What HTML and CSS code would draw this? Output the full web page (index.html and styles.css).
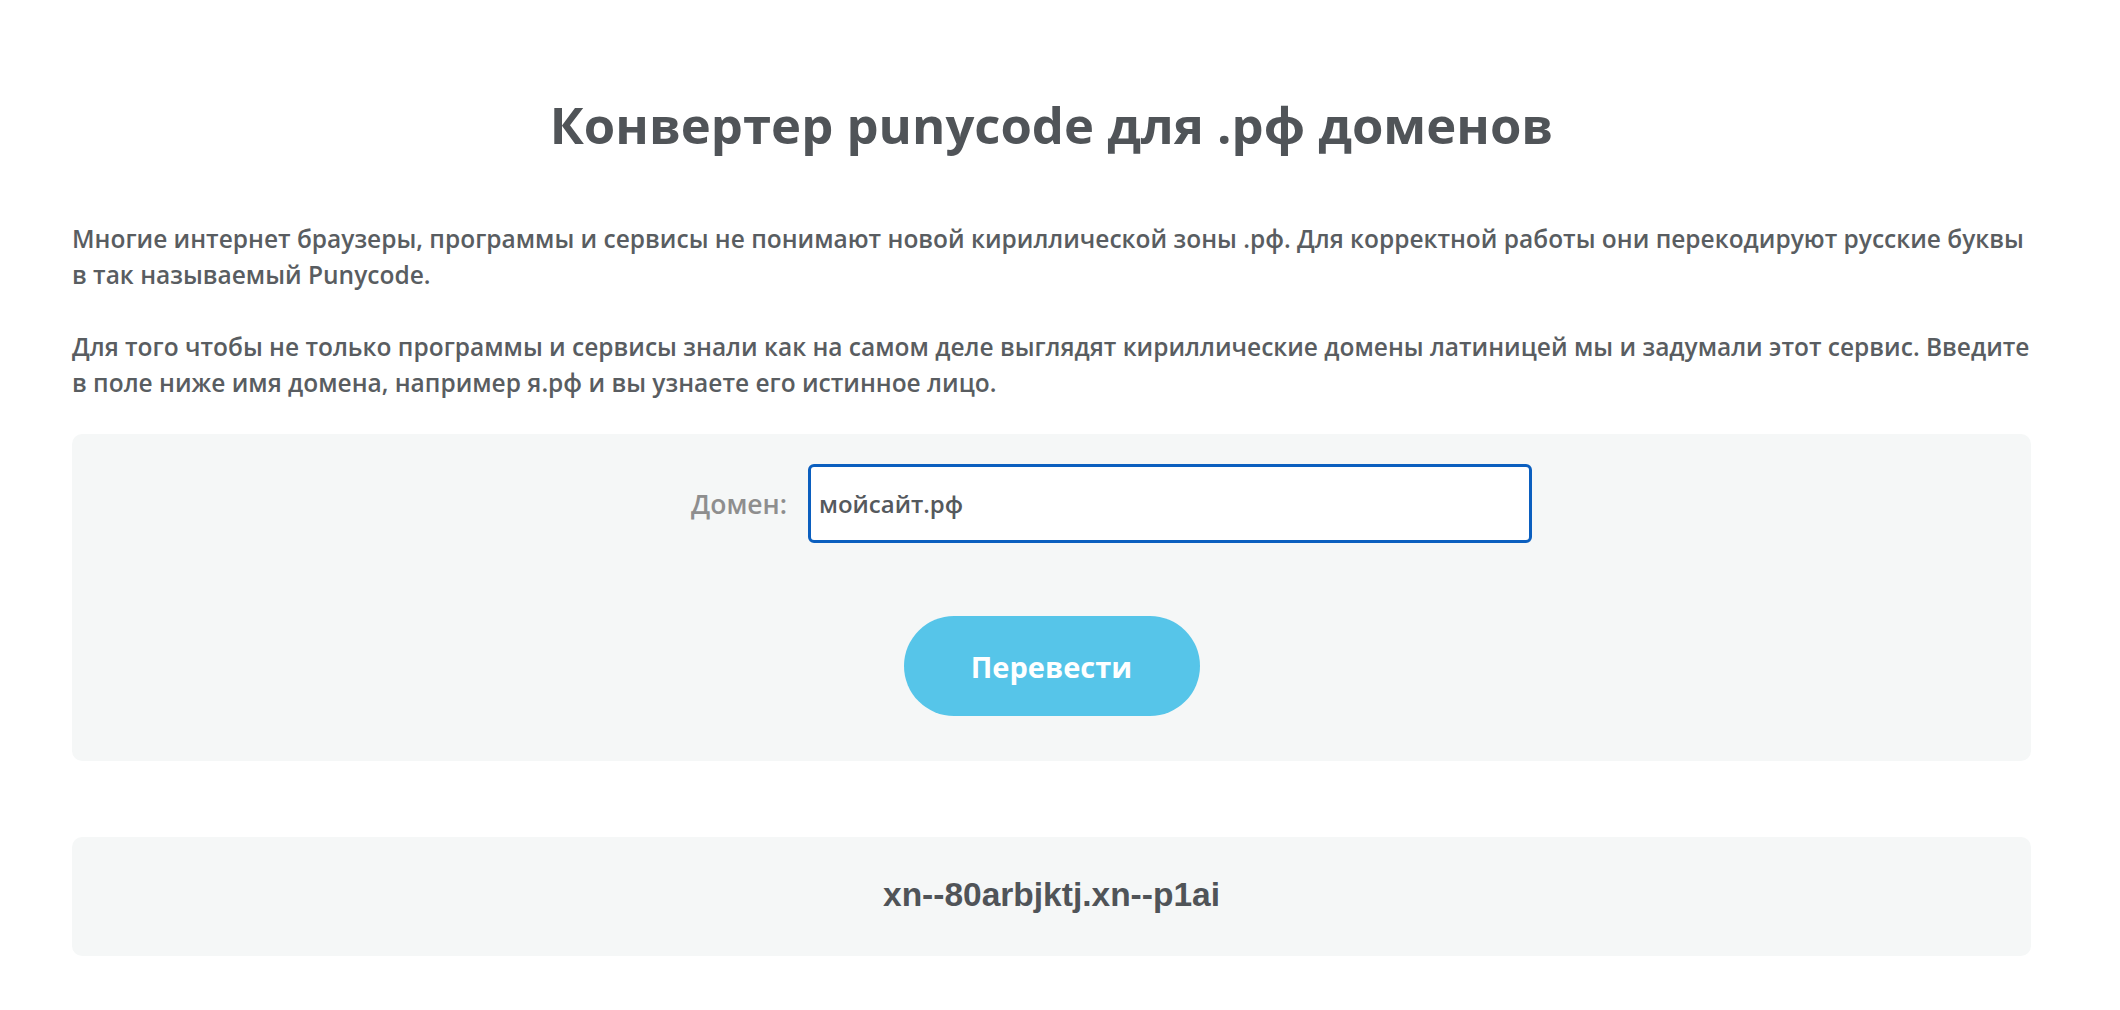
FILE: index.html
```html
<!DOCTYPE html>
<html lang="ru">
<head>
<meta charset="utf-8">
<title>Конвертер punycode для .рф доменов</title>
<link rel="stylesheet" href="styles.css">
</head>
<body>
<main class="page">
  <h1 class="title">Конвертер punycode для .рф доменов</h1>
  <p class="lead">Многие интернет браузеры, программы и сервисы не понимают новой кириллической зоны .рф. Для корректной работы они перекодируют русские буквы<br>в так называемый Punycode.</p>
  <p class="lead">Для того чтобы не только программы и сервисы знали как на самом деле выглядят кириллические домены латиницей мы и задумали этот сервис. Введите<br>в поле ниже имя домена, например я.рф и вы узнаете его истинное лицо.</p>
  <form class="panel converter">
    <div class="field-row">
      <label class="field-label" for="domain">Домен:</label>
      <input class="field-input" id="domain" type="text" value="мойсайт.рф">
    </div>
    <button class="btn" type="button">Перевести</button>
  </form>
  <div class="panel result">xn--80arbjktj.xn--p1ai</div>
</main>
</body>
</html>
```
FILE: styles.css
```css
* { box-sizing: border-box; }
body {
  margin: 0;
  background: #ffffff;
  color: #505458;
  font-family: "Open Sans", "Liberation Sans", sans-serif;
}
.page {
  padding: 95px 89px 0 72px;
}
.title {
  margin: 0 0 66px;
  font-size: 50.8px;
  line-height: 60px;
  font-weight: 700;
  text-align: center;
  color: #505458;
}
.lead {
  margin: 0 0 36px;
  font-size: 24.5px;
  line-height: 36px;
  font-weight: 600;
  white-space: nowrap;
  color: #595d61;
}
.lead + .panel { margin-top: -3px; }
.panel {
  background: #f5f7f7;
  border-radius: 10px;
}
.converter {
  padding: 30px 0 45px;
  display: flex;
  flex-direction: column;
  align-items: center;
}
.field-row {
  align-self: stretch;
  display: flex;
  align-items: center;
  justify-content: center;
  gap: 21px;
  padding-left: 96px;
}
.field-label {
  width: 120px;
  text-align: right;
  font-size: 26.5px;
  font-weight: 600;
  color: #8e8e8e;
}
.field-input {
  width: 724px;
  height: 79px;
  border: 3px solid #0b5fbf;
  border-radius: 6px;
  background: #ffffff;
  padding: 0 8px;
  font-family: "Open Sans", "Liberation Sans", sans-serif;
  font-size: 24px;
  font-weight: 600;
  color: #55595d;
  outline: none;
}
.btn {
  margin-top: 73px;
  width: 296px;
  height: 100px;
  border: none;
  border-radius: 50px;
  background: #56c5e9;
  color: #ffffff;
  font-family: "Open Sans", "Liberation Sans", sans-serif;
  font-size: 29px;
  font-weight: 700;
}
.result {
  margin-top: 76px;
  padding: 40px 0 43px;
  text-align: center;
  font-family: "Liberation Sans", Arial, sans-serif;
  font-size: 33.5px;
  line-height: 36px;
  font-weight: 700;
  color: #505458;
}
```
